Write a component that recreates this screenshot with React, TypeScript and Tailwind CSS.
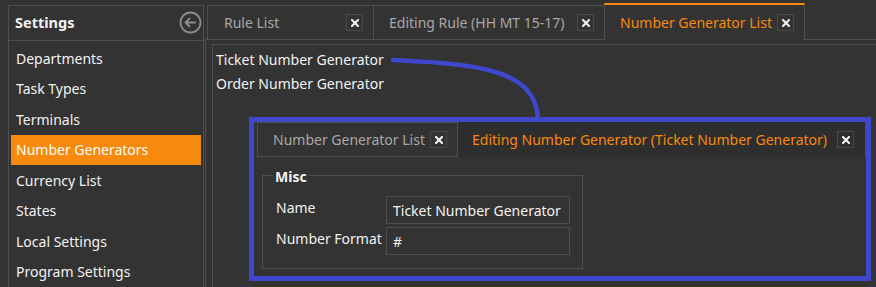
import React from "react";

const CloseBox = ({ className = "" }: { className?: string }) => (
  <div className={`w-[17px] h-[17px] border border-[#4a4a4a] flex items-center justify-center ${className}`}>
    <svg width="8" height="8" viewBox="0 0 8 8">
      <path d="M1 1 L7 7 M7 1 L1 7" stroke="#f2f2f2" strokeWidth="2.1" strokeLinecap="square" />
    </svg>
  </div>
);

const menu = [
  "Departments",
  "Task Types",
  "Terminals",
  "Number Generators",
  "Currency List",
  "States",
  "Local Settings",
  "Program Settings",
];

export default function App() {
  return (
    <div className="relative w-[876px] h-[287px] overflow-hidden bg-[#333333] text-[#f2f2f2] text-[14px] font-['Noto_Sans',sans-serif]">
      <div className="flex h-full">
        {/* Left panel */}
        <div className="ml-[8px] mt-[5px] w-[196px] shrink-0 border-x border-t border-[#4f4f4f] flex flex-col">
          <div className="h-[35px] border-b border-[#4f4f4f] flex items-center justify-between pl-[6px] pr-[1px]">
            <span className="font-bold text-[14.5px] text-[#f2f2f2]">Settings</span>
            <svg width="23" height="23" viewBox="0 0 23 23">
              <circle cx="11.5" cy="11.5" r="10" fill="none" stroke="#8c8c8c" strokeWidth="1.8" />
              <path d="M17 11.5 H6.5 M11 7 L6.5 11.5 L11 16" fill="none" stroke="#8c8c8c" strokeWidth="1.8" />
            </svg>
          </div>
          <div className="pt-[2.5px] px-[2px] flex flex-col">
            {menu.map((m) => (
              <div
                key={m}
                className={`h-[30.5px] flex items-center pl-[5px] ${
                  m === "Number Generators" ? "bg-[#f7890c] text-white" : ""
                }`}
              >
                {m}
              </div>
            ))}
          </div>
        </div>

        {/* Right area */}
        <div className="flex-1 flex flex-col pl-[1px]">
          <div className="h-[36px] mt-[3px] flex items-end pl-[2px]">
            <div className="h-[34px] w-[166px] border-l border-t border-[#4f4f4f] flex items-center justify-between pl-[16px] pr-[10px] text-[#a8a8a8]">
              <span>Rule List</span>
              <CloseBox />
            </div>
            <div className="h-[34px] w-[231px] border-l border-t border-[#4f4f4f] flex items-center justify-between pl-[15px] pr-[10px] text-[#a8a8a8]">
              <span>Editing Rule (HH MT 15-17)</span>
              <CloseBox />
            </div>
            <div className="relative z-10 -mb-px h-[37px] w-[201px] border-x border-t-2 border-x-[#4f4f4f] border-t-[#f7890c] bg-[#333333] flex items-center justify-between pl-[15px] pr-[10px] text-[#f7890c]">
              <span>Number Generator List</span>
              <CloseBox />
            </div>
          </div>
          <div className="flex-1 border-l border-t border-[#4f4f4f] pl-[6px] pt-[4px]">
            <div className="h-full border-l border-t border-[#4f4f4f] pl-[3px] pt-[2px] flex flex-col">
              <div className="h-[24px] flex items-center">Ticket Number Generator</div>
              <div className="h-[24px] flex items-center">Order Number Generator</div>
            </div>
          </div>
        </div>
      </div>

      {/* Pasted inner screenshot with blue highlight */}
      <div className="absolute left-[249px] top-[117px] w-[622px] h-[164px] border-[5px] border-[#3f48cc] bg-[#333333] flex flex-col">
        <div className="h-[35px] flex items-stretch bg-[#333333]">
          <div className="ml-[3px] w-[201px] border border-[#4f4f4f] flex items-center justify-between pl-[15px] pr-[10px] text-[#a8a8a8] bg-[#333333]">
            <span>Number Generator List</span>
            <CloseBox />
          </div>
          <div className="flex-1 border-r border-[#4f4f4f] bg-[#2e2e2e] flex items-center justify-between pl-[14px] pr-[11px] text-[#f7890c]">
            <span>Editing Number Generator (Ticket Number Generator)</span>
            <CloseBox />
          </div>
        </div>
        <div className="flex-1 pl-[8px] pt-[18px]">
          <div className="relative w-[321px] h-[94px] border border-[#4f4f4f] pt-[20px] pl-[13px]">
            <span className="absolute left-[10px] -top-[10px] px-[2px] bg-[#333333] font-bold text-[14px]">Misc</span>
            <div className="flex items-center h-[28px]">
              <span className="w-[110px] -mt-[6px]">Name</span>
              <div className="w-[184px] h-[28px] border border-[#4f4f4f] flex items-center pl-[6px]">Ticket Number Generator</div>
            </div>
            <div className="flex items-center h-[28px] mt-[3px]">
              <span className="w-[110px] -mt-[6px]">Number Format</span>
              <div className="w-[184px] h-[28px] border border-[#4f4f4f] flex items-center pl-[6px]">#</div>
            </div>
          </div>
        </div>
      </div>

      {/* Blue connector curve */}
      <svg className="absolute left-0 top-0 pointer-events-none" width="876" height="287" viewBox="0 0 876 287">
        <path d="M393 60 C480 64 535 70 538 118" fill="none" stroke="#3f48cc" strokeWidth="4.5" strokeLinecap="round" />
      </svg>
    </div>
  );
}
